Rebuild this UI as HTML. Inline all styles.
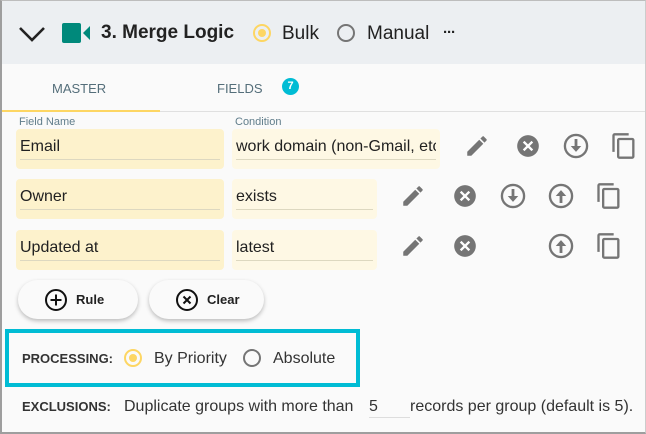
<!DOCTYPE html>
<html><head><meta charset="utf-8"><style>
*{box-sizing:border-box;margin:0;padding:0}
body{width:646px;height:434px;overflow:hidden;background:#fafafa;font-family:"Liberation Sans",sans-serif;color:#212121;position:relative}
.frame{position:absolute;left:0;top:0;width:646px;height:434px;border:2px solid #9e9e9e;border-top:1px solid #bdbdbd;border-right:1px solid #ccc;pointer-events:none}
.hdr{position:absolute;left:0;top:0;width:646px;height:64px;background:#eceff2}
.a{position:absolute;white-space:nowrap}
.fld{position:absolute;height:40px;border-radius:4px;font-size:16px;padding:8px 4px 0 4px;white-space:nowrap;overflow:hidden}
.fld span{display:block;border-bottom:1px solid #ddd8c0;height:23px;padding-top:1px;overflow:hidden}
.n{background:#fdf2cc}.c{background:#fef8e4}
.btn{position:absolute;height:39px;border-radius:20px;background:#fafafa;box-shadow:0 2px 4px rgba(0,0,0,.25);font-size:13px;font-weight:bold;display:flex;align-items:center;color:#222}
.radio{position:absolute;width:18px;height:18px;border-radius:50%;border:2px solid #757575}
.radio.on{border-color:#fdd663}
.radio.on:after{content:"";position:absolute;left:3px;top:3px;width:8px;height:8px;border-radius:50%;background:#fdd663}
</style></head><body>
<div class="hdr"></div>
<svg class="a" style="left:18px;top:25px" width="28" height="18" viewBox="0 0 28 18"><path d="M2 3 L14 15 L26 3" fill="none" stroke="#222" stroke-width="2.6"/></svg>
<svg class="a" style="left:62px;top:23px" width="29" height="20" viewBox="0 0 29 20"><rect x="0" y="0" width="19" height="20" rx="2" fill="#00897b"/><path d="M21 10 L28 3 V17Z" fill="#00897b"/></svg>
<div class="a" style="left:101px;top:22px;font-size:19px;font-weight:bold;color:#222">3. Merge Logic</div>
<div class="radio on" style="left:253px;top:24px"></div>
<div class="a" style="left:282px;top:23px;font-size:19px">Bulk</div>
<div class="radio" style="left:337px;top:24px"></div>
<div class="a" style="left:367px;top:23px;font-size:19px">Manual</div>
<div class="a" style="left:443px;top:24px;font-size:15px;font-weight:bold;letter-spacing:-1px">···</div>

<div class="a" style="left:52px;top:81px;font-size:13px;color:#546e7a">MASTER</div>
<div class="a" style="left:217px;top:81px;font-size:13px;color:#546e7a">FIELDS</div>
<div class="a" style="left:282px;top:78px;width:17px;height:17px;border-radius:50%;background:#00bcd4;color:#fff;font-size:11px;text-align:center;line-height:17px;font-weight:bold">7</div>
<div class="a" style="left:0;top:110px;width:160px;height:2px;background:#fdd663"></div>
<div class="a" style="left:160px;top:111px;width:486px;height:1px;background:#e0e0e0"></div>

<div class="a" style="left:19px;top:116px;font-size:11px;color:#607d8b">Field Name</div>
<div class="a" style="left:235px;top:116px;font-size:11px;color:#607d8b">Condition</div>
<div class="fld n" style="left:16px;top:129px;width:208px"><span>Email</span></div>
<div class="fld c" style="left:232px;top:129px;width:208px"><span style="width:200px">work domain (non-Gmail, etc</span></div>
<div class="fld n" style="left:16px;top:179px;width:208px"><span>Owner</span></div>
<div class="fld c" style="left:232px;top:179px;width:145px"><span>exists</span></div>
<div class="fld n" style="left:16px;top:230px;width:208px"><span>Updated at</span></div>
<div class="fld c" style="left:232px;top:230px;width:145px"><span>latest</span></div>

<svg width="0" height="0" style="position:absolute"><defs>
<g id="pen"><path d="M3 17.25V21h3.75L17.81 9.94l-3.75-3.75L3 17.25zM20.71 7.04a1 1 0 000-1.41l-2.34-2.34a1 1 0 00-1.41 0l-1.830 1.83 3.75 3.75 1.83-1.83z" fill="#757575"/></g>
<g id="x"><circle cx="12" cy="12" r="10" fill="#757575"/><path d="M8 8l8 8M16 8l-8 8" stroke="#fff" stroke-width="2.2"/></g>
<g id="dn"><circle cx="12" cy="12" r="9.5" fill="none" stroke="#757575" stroke-width="2"/><path d="M12 6v7" stroke="#757575" stroke-width="2.4"/><path d="M7.5 12h9L12 17z" fill="#757575"/></g>
<g id="up"><circle cx="12" cy="12" r="9.5" fill="none" stroke="#757575" stroke-width="2"/><path d="M12 11v7" stroke="#757575" stroke-width="2.4"/><path d="M7.5 12h9L12 7z" fill="#757575"/></g>
<g id="cp"><path d="M16 1H4a2 2 0 00-2 2v14h2V3h12V1zm3 4H8a2 2 0 00-2 2v14a2 2 0 002 2h11a2 2 0 002-2V7a2 2 0 00-2-2zm0 16H8V7h11v14z" fill="#757575"/></g>
</defs></svg>
<svg class="a" style="left:464px;top:133px" width="26" height="26" viewBox="0 0 24 24"><use href="#pen"/></svg>
<svg class="a" style="left:515px;top:133px" width="26" height="26" viewBox="0 0 24 24"><use href="#x"/></svg>
<svg class="a" style="left:562px;top:132px" width="28" height="28" viewBox="0 0 24 24"><use href="#dn"/></svg>
<svg class="a" style="left:610px;top:131px" width="28" height="30" viewBox="0 0 24 24"><use href="#cp"/></svg>

<svg class="a" style="left:400px;top:183px" width="26" height="26" viewBox="0 0 24 24"><use href="#pen"/></svg>
<svg class="a" style="left:452px;top:183px" width="26" height="26" viewBox="0 0 24 24"><use href="#x"/></svg>
<svg class="a" style="left:499px;top:182px" width="28" height="28" viewBox="0 0 24 24"><use href="#dn"/></svg>
<svg class="a" style="left:547px;top:182px" width="28" height="28" viewBox="0 0 24 24"><use href="#up"/></svg>
<svg class="a" style="left:595px;top:181px" width="28" height="30" viewBox="0 0 24 24"><use href="#cp"/></svg>

<svg class="a" style="left:400px;top:233px" width="26" height="26" viewBox="0 0 24 24"><use href="#pen"/></svg>
<svg class="a" style="left:452px;top:233px" width="26" height="26" viewBox="0 0 24 24"><use href="#x"/></svg>
<svg class="a" style="left:547px;top:232px" width="28" height="28" viewBox="0 0 24 24"><use href="#up"/></svg>
<svg class="a" style="left:595px;top:231px" width="28" height="30" viewBox="0 0 24 24"><use href="#cp"/></svg>

<div class="btn" style="left:18px;top:280px;width:120px;padding-left:26px"><svg width="24" height="24" viewBox="0 0 24 24" style="margin-right:8px"><circle cx="12" cy="12" r="10" fill="none" stroke="#111" stroke-width="2"/><path d="M12 6.5v11M6.5 12h11" stroke="#111" stroke-width="2"/></svg>Rule</div>
<div class="btn" style="left:149px;top:280px;width:115px;padding-left:26px"><svg width="24" height="24" viewBox="0 0 24 24" style="margin-right:8px"><circle cx="12" cy="12" r="10" fill="none" stroke="#111" stroke-width="2"/><path d="M8.5 8.5l7 7M15.5 8.5l-7 7" stroke="#111" stroke-width="2"/></svg>Clear</div>

<div class="a" style="left:5px;top:329px;width:355px;height:58px;border:4px solid #00bcd4"></div>
<div class="a" style="left:22px;top:351px;font-size:13px;font-weight:bold;color:#333">PROCESSING:</div>
<div class="radio on" style="left:124px;top:349px"></div>
<div class="a" style="left:154px;top:350px;font-size:16px;color:#333">By Priority</div>
<div class="radio" style="left:243px;top:349px"></div>
<div class="a" style="left:273px;top:350px;font-size:16px;color:#333">Absolute</div>

<div class="a" style="left:22px;top:399px;font-size:13px;font-weight:bold;color:#333">EXCLUSIONS:</div>
<div class="a" style="left:124px;top:398px;font-size:16px;color:#333">Duplicate groups with more than</div>
<div class="a" style="left:369px;top:398px;font-size:16px;color:#333">5</div>
<div class="a" style="left:369px;top:417px;width:41px;height:1px;background:#ddd"></div>
<div class="a" style="left:410px;top:398px;font-size:16px;color:#333">records per group (default is 5).</div>
<div class="frame"></div>
</body></html>
